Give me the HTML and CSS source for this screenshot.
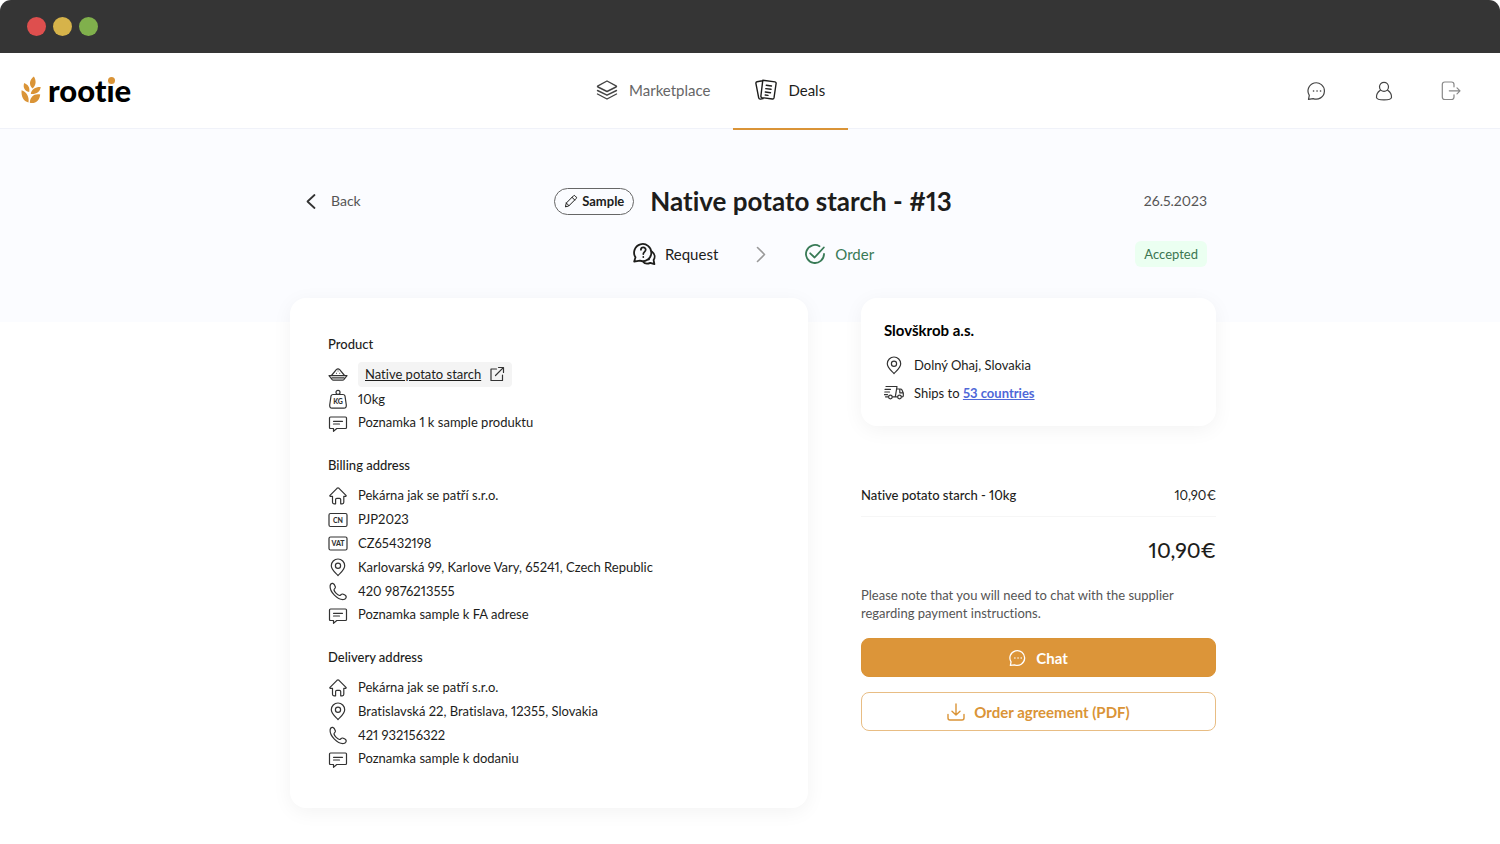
FILE: index.html
```html
<!DOCTYPE html>
<html lang="en">
<head>
<meta charset="utf-8">
<title>Rootie – Native potato starch</title>
<link rel="stylesheet" href="styles.css">
</head>
<body>
<svg class="defs" aria-hidden="true">
  <symbol id="pin" viewBox="0 0 20 20"><path d="M10 18.500C7.500 15.700 3.300 12.700 3.300 8.700A6.700 6.700 0 0 1 16.700 8.700C16.700 12.700 12.500 15.700 10 18.500Z"/><circle cx="10" cy="8.800" r="2.600"/></symbol>
  <symbol id="home" viewBox="0 0 20 20"><path d="M4.500 11.300H2.300Q1.300 11.100 2 10.300L9 3.300Q10 2.400 11 3.300L18 10.300Q18.700 11.100 17.700 11.300H15.800V17.300Q15.800 18.800 14.300 18.800H12.700V14.500Q12.700 13.300 11.500 13.300H8.800Q7.600 13.300 7.600 14.500V18.800H6Q4.500 18.800 4.500 17.300Z"/></symbol>
  <symbol id="phone" viewBox="0 0 20 20"><path d="M2.100 4.800C2.300 3.500 3.500 2.200 4.800 2.400C6 2.800 7 4.700 7.400 6C7.700 7.200 5.900 7.900 6 9C6.500 11 9.500 14 11.500 14.500C12.600 14.700 13.300 12.700 14.500 13C16 13.400 18 14.500 18.200 15.600C18.400 17 17 18.300 15.600 18.500C9.500 19 1.600 11 2.100 4.800Z"/></symbol>
  <symbol id="note" viewBox="0 0 20 20"><path d="M2.500 5H17.500Q18.500 5 18.500 6V15.500Q18.500 16.500 17.500 16.500H8.800L5.500 19.300V16.500H2.500Q1.500 16.500 1.500 15.500V6Q1.500 5 2.500 5ZM5.500 9.300H14.500M5.500 12H11.500"/></symbol>
  <symbol id="chat" viewBox="0 0 20 20"><path d="M1.500 18.300L2.300 14.400A8.200 8.200 0 1 1 6.200 17.600Z"/><path class="dots" d="M6.500 10h.1M10 10h.1M13.500 10h.1"/></symbol>
</svg>

<div class="chrome"><span class="dot red"></span><span class="dot yellow"></span><span class="dot green"></span></div>

<header class="header">
  <a class="logo" href="#">
    <svg class="leaf" viewBox="0 0 20 28" aria-hidden="true"><path d="M12.900 .5C8.500 4 7.500 8.500 11.500 12.500C15.500 9 15.300 4.500 12.900 .5ZM3.200 7C1.800 11 3.200 14.800 8.200 16C9.200 11.500 7 8.500 3.200 7ZM19.700 11C14.500 10.800 10.500 13 9.800 18C15 18.500 19.300 16 19.700 11ZM.6 14.200C0 20.500 2.400 25 7.500 26.500C8.400 20.500 5.500 16 .6 14.200ZM19.200 18.500C13 17.500 9.300 20.500 8.800 26.800C14.500 28 18.700 24.500 19.200 18.500Z"/></svg>
    <span class="wordmark">root<span class="i">i</span>e</span>
  </a>
  <nav class="nav">
    <a class="tab" href="#"><svg class="icon22" viewBox="0 0 22 22" aria-hidden="true"><path d="M11 2L20 6.800Q21 7.400 20 8L11 12.500L2 8Q1 7.400 2 6.800ZM1.500 11.500L11 16.200L20.500 11.500M1.500 15L11 20L20.500 15"/></svg>Marketplace</a>
    <a class="tab active" href="#" aria-current="page"><svg class="icon22" viewBox="0 0 22 22" aria-hidden="true"><path d="M7.800 1.200L20 2.900Q21.300 3.200 21.100 4.500L19 18.900Q18.700 20.200 17.400 20L7 18.600Q5.700 18.300 5.900 17L7.800 1.200ZM7.500 1.800L2 2.700Q.7 3 .9 4.300L3.700 18.900Q4 20.300 5.500 20.100L8 19.600M11.300 6.200L16.500 7M10.800 9.600L16 10.300M10.300 13L15.500 13.700M10.200 16L13 16.400"/></svg>Deals</a>
  </nav>
  <div class="actions">
    <button aria-label="Messages"><svg class="icon20" aria-hidden="true"><use href="#chat"/></svg></button>
    <button aria-label="Profile"><svg class="icon20" viewBox="0 0 20 20" aria-hidden="true"><circle cx="10" cy="5.800" r="4.500"/><path d="M6.300 9.300C3.800 11 2.300 14 2.500 16.500C2.800 18.200 6 18.900 10 18.900S17.200 18.200 17.500 16.500C17.700 14 16.200 11 13.700 9.300"/></svg></button>
    <button class="muted" aria-label="Log out"><svg class="icon20" viewBox="0 0 20 20" aria-hidden="true"><path d="M13 5.800V3.500Q13 1 10.500 1H3.800Q1.300 1 1.300 3.500V16Q1.300 18.500 3.800 18.500H10.500Q13 18.500 13 16V13.800M8.300 9.800H19M16 6.800L19 9.800L16 12.800"/></svg></button>
  </div>
</header>

<main class="main">
  <div class="page">
    <div class="head">
      <a class="back" href="#"><svg class="icon24" viewBox="0 0 24 24" aria-hidden="true"><path d="M15.500 6L8.500 12.500L15.500 19"/></svg>Back</a>
      <div class="title">
        <span class="badge"><svg class="icon14" viewBox="0 0 14 14" aria-hidden="true"><path d="M1.500 12.500L2.300 9L9.500 1.800Q10.300 1.100 11 1.800L12.200 3Q13 3.800 12.200 4.500L5 11.700ZM8 3.300L10.700 6M2.300 9L5 11.700"/></svg>Sample</span>
        <h1>Native potato starch - #13</h1>
      </div>
      <time class="date" datetime="2023-05-26">26.5.2023</time>
      <div class="steps">
        <span class="step"><svg class="icon24" viewBox="0 0 24 24" aria-hidden="true"><path d="M2.200 19.600L3.500 15.300A8.600 8.600 0 1 1 7.800 18.700ZM19.800 9.500C23 12 23.300 15.500 21.600 18L22.400 22.200L18.300 20.800C15.500 22 12.300 21.600 10.500 19.200M15 17.900L17 17.300M8.900 7.800C9.100 4.600 13.800 4.800 13.700 7.800C13.600 9.800 11.300 9.900 11.300 12M11.300 14.900v.2"/></svg>Request</span>
        <svg class="icon24 arrow" viewBox="0 0 24 24" aria-hidden="true"><path d="M8.500 5.500L15.500 12.500L8.500 19.500"/></svg>
        <span class="step done"><svg class="icon22 check" viewBox="0 0 22 22" aria-hidden="true"><path d="M15.500 3.200A9 9 0 1 0 20 11M6.200 10.300L10.600 14.500L19.800 4.500"/></svg>Order</span>
      </div>
      <span class="status">Accepted</span>
    </div>

    <div class="columns">
      <section class="card details">
        <h2>Product</h2>
        <ul>
          <li class="linked"><svg class="icon20" viewBox="0 0 20 20" aria-hidden="true"><path d="M1 10.700H19L16 14.500Q15.500 15.200 14.500 15.200H5.500Q4.500 15.200 4 14.500ZM3.500 10.500L8.300 4.700Q10 3 11.700 4.700L16.500 10.500M4 12.900H16"/><path class="specks" d="M10 6h.1M8.500 8.300h.1M11.700 8.300h.1"/></svg>
            <a class="product" href="#"><span>Native potato starch</span><svg class="icon16" viewBox="0 0 16 16" aria-hidden="true"><path d="M7.500 3H2V14.500H13.500V9M9.500 1.500H14.500V6.500M14.300 1.700L6.500 9.500"/></svg></a></li>
          <li><svg class="icon20" viewBox="0 0 20 20" aria-hidden="true"><circle cx="10" cy="3.400" r="2"/><path d="M5 5.500H15Q16.500 5.500 17 7L18.300 16Q18.500 19.200 16 19.200H4Q1.500 19.200 1.700 16L3 7Q3.500 5.500 5 5.500Z"/><text x="10" y="15">KG</text></svg>10kg</li>
          <li class="remark"><svg class="icon20" aria-hidden="true"><use href="#note"/></svg>Poznamka 1 k sample produktu</li>
        </ul>
        <h2>Billing address</h2>
        <ul>
          <li><svg class="icon20" aria-hidden="true"><use href="#home"/></svg>Pekárna jak se patří s.r.o.</li>
          <li><svg class="icon20" viewBox="0 0 20 20" aria-hidden="true"><rect x="1" y="4.500" width="18" height="13" rx="1.500"/><text x="10" y="13.500">CN</text></svg>PJP2023</li>
          <li><svg class="icon20" viewBox="0 0 20 20" aria-hidden="true"><rect x="1" y="4" width="18" height="13" rx="1.500"/><text x="10" y="13">VAT</text></svg>CZ65432198</li>
          <li><svg class="icon20" aria-hidden="true"><use href="#pin"/></svg>Karlovarská 99, Karlove Vary, 65241, Czech Republic</li>
          <li><svg class="icon20" aria-hidden="true"><use href="#phone"/></svg>420 9876213555</li>
          <li class="remark"><svg class="icon20" aria-hidden="true"><use href="#note"/></svg>Poznamka sample k FA adrese</li>
        </ul>
        <h2>Delivery address</h2>
        <ul>
          <li><svg class="icon20" aria-hidden="true"><use href="#home"/></svg>Pekárna jak se patří s.r.o.</li>
          <li><svg class="icon20" aria-hidden="true"><use href="#pin"/></svg>Bratislavská 22, Bratislava, 12355, Slovakia</li>
          <li><svg class="icon20" aria-hidden="true"><use href="#phone"/></svg>421 932156322</li>
          <li class="remark"><svg class="icon20" aria-hidden="true"><use href="#note"/></svg>Poznamka sample k dodaniu</li>
        </ul>
      </section>

      <aside class="side">
        <section class="card supplier">
          <h2>Slovškrob a.s.</h2>
          <ul>
            <li><svg class="icon20" aria-hidden="true"><use href="#pin"/></svg>Dolný Ohaj, Slovakia</li>
            <li><svg class="icon20" viewBox="0 0 20 20" aria-hidden="true"><path d="M2 3.500H13L11.300 13.800H8.500M1 6.300H6.500M.8 9H5.500M.3 11.700H3.500M1.500 13.800H4.300M12.700 6H16.500Q17.500 6 18 7L19.300 10V12.800Q19.300 13.800 18.300 13.800H17.500M13.500 13.800H11.300M15.800 6.200V9.800H19"/><circle cx="6.400" cy="14" r="1.800"/><circle cx="15.500" cy="14" r="1.800"/></svg><span>Ships to <a href="#">53 countries</a></span></li>
          </ul>
        </section>
        <div class="line"><strong>Native potato starch - 10kg</strong><span>10,90€</span></div>
        <p class="total">10,90€</p>
        <p class="hint">Please note that you will need to chat with the supplier regarding payment instructions.</p>
        <button class="btn primary"><svg class="icon18" aria-hidden="true"><use href="#chat"/></svg>Chat</button>
        <button class="btn outline"><svg class="icon18" viewBox="0 0 18 18" aria-hidden="true"><path d="M9 1V12M5 8.200L9 12L13 8.200M1 11.500V15Q1 17 3 17H15Q17 17 17 15V11.500"/></svg>Order agreement (PDF)</button>
      </aside>
    </div>
  </div>
</main>
</body>
</html>
```

FILE: styles.css
```css
* { box-sizing: border-box; }

body {
  margin: 0;
  background: #fff;
  color: #1d1d1b;
  font: 13px/18px Lato, "Open Sans", sans-serif;
  font-variant-ligatures: none;
  font-variant-numeric: proportional-nums;
}

h1, h2, p, ul { margin: 0; padding: 0; }
ul { list-style: none; }
a { color: inherit; text-decoration: none; }

button {
  border: 0;
  padding: 0;
  background: none;
  color: inherit;
  font: inherit;
  font-variant-ligatures: none;
  cursor: pointer;
}

svg {
  flex: none;
  fill: none;
  stroke: currentColor;
  stroke-width: 1.2;
  stroke-linecap: round;
  stroke-linejoin: round;
}
svg text {
  fill: currentColor;
  stroke: none;
  font: 900 7px Lato, sans-serif;
  text-anchor: middle;
}
.dots { stroke-width: 1.6; }
.specks { stroke-width: 1; }
.defs { position: absolute; width: 0; height: 0; }
.icon14 { width: 14px; height: 14px; stroke-width: 1; }
.icon16 { width: 16px; height: 16px; }
.icon18 { width: 18px; height: 18px; stroke-width: 1.4; }
.icon20 { width: 20px; height: 20px; }
.icon22 { width: 22px; height: 22px; stroke-width: 1.4; }
.icon24 { width: 24px; height: 24px; stroke-width: 1.8; }

/* Window bar */
.chrome {
  display: flex;
  align-items: center;
  gap: 7px;
  height: 53px;
  padding-left: 27px;
  border-radius: 11px 11px 0 0;
  background: #353535;
}
.dot { width: 19px; height: 19px; border-radius: 50%; }
.red { background: #de4f4e; }
.yellow { background: #d6b34a; }
.green { background: #80b04c; }

/* Header */
.header {
  display: flex;
  align-items: stretch;
  justify-content: space-between;
  height: 76px;
  padding: 0 23px 0 21px;
  border-bottom: 1px solid #f0f2f9;
}
.logo { display: flex; align-items: center; gap: 7px; padding-bottom: 2px; }
.leaf { width: 20px; height: 28px; fill: #da9437; stroke: none; }
.wordmark { color: #000; font-size: 31px; font-weight: 900; line-height: 36px; }
.i { position: relative; }
.i::before {
  content: "";
  position: absolute;
  top: 6px;
  left: 1px;
  width: 7px;
  height: 7px;
  background: #da9437;
  border-radius: 50%;
  box-shadow: 0 0 0 1px #fff;
}
.nav { display: flex; }
.tab {
  display: flex;
  align-items: center;
  gap: 11px;
  padding: 0 23px 1px 22px;
  margin-bottom: -2px;
  border-bottom: 2px solid transparent;
  color: #666;
  font-size: 15px;
}
.tab svg { color: #444; }
.active, .active svg { color: #1d1d1b; }
.active { border-bottom-color: #da9437; }
.actions { display: flex; gap: 15px; color: #444; }
.actions button { display: grid; place-items: center; width: 52px; }
.actions .muted { color: #888; }

/* Page */
.main {
  padding: 57px 24px 36px 30px;
  background: linear-gradient(#fbfcff, #fbfcff) top / 100% 193px no-repeat;
}
.page { max-width: 926px; margin: 0 auto; }
.head {
  display: grid;
  grid-template-columns: 1fr auto 1fr;
  row-gap: 25px;
  align-items: center;
  padding: 0 9px;
}
.back { display: flex; align-items: center; gap: 8px; color: #555; font-size: 14px; }
.back svg { color: #333; }
.title { display: flex; align-items: center; gap: 16px; }
.badge {
  display: flex;
  align-items: center;
  gap: 4px;
  height: 27px;
  padding: 0 9px;
  border: 1px solid #666;
  border-radius: 14px;
  font-weight: 700;
}
h1 { font-size: 26px; line-height: 30px; }
.date { justify-self: end; color: #555; font-size: 14px; }
.steps {
  grid-column: 2;
  display: flex;
  align-items: center;
  justify-content: center;
  gap: 31px;
}
.step { display: flex; align-items: center; gap: 9px; color: #1d1d1b; font-size: 15px; }
.arrow { color: #999; stroke-width: 1.6; }
.check { stroke-width: 1.8; }
.done { color: #387a56; }
.status {
  justify-self: end;
  padding: 4px 9px;
  border-radius: 6px;
  background: #ebfff1;
  color: #3c7650;
}
.columns {
  display: grid;
  grid-template-columns: 518fr 355fr;
  align-items: start;
  gap: 53px;
  margin-top: 31px;
}
.card {
  border-radius: 16px;
  background: #fff;
  box-shadow: 0 4px 20px rgba(0, 0, 0, 0.05);
}

/* Order details */
.details { padding: 37px 38px 39px; }
.details h2 { font-size: 13px; line-height: 18px; margin-bottom: 9px; font-weight: 500; }
.details ul + h2 { margin-top: 23px; }
.card li { display: flex; align-items: center; gap: 10px; height: 24px; }
.card li svg { color: #333; }
.card .linked { height: 25px; }
.card .remark { height: 22px; padding-bottom: 1px; }
.product {
  display: flex;
  align-items: center;
  gap: 8px;
  height: 25px;
  padding: 0 7px 2px;
  border-radius: 4px;
  background: #f4f4f4;
}
.product span { text-decoration: underline; }

/* Supplier and price */
.supplier { padding: 22px 23px 19px; }
.supplier h2 { margin-bottom: 11px; color: #000; font-size: 15px; line-height: 20px; }
.supplier li { height: 28px; }
.supplier a { color: #4f68d8; font-weight: 700; text-decoration: underline; }
.line {
  display: flex;
  justify-content: space-between;
  margin-top: 60px;
  padding-bottom: 12px;
  border-bottom: 1px solid #f6f6f6;
}
.line strong { font-weight: 500; }
.total { margin-top: 20px; font-size: 21px; line-height: 26px; font-weight: 500; text-align: right; }
.hint { margin-top: 23px; padding-right: 30px; color: #555; }
.btn {
  display: flex;
  align-items: center;
  justify-content: center;
  gap: 9px;
  width: 100%;
  height: 39px;
  border: 1px solid #da9437;
  border-radius: 8px;
  font-size: 15px;
  font-weight: 700;
}
.primary { margin-top: 16px; background: #dc9539; color: #fff; }
.outline { margin-top: 15px; border-color: #e8bd84; color: #da9437; }
```
